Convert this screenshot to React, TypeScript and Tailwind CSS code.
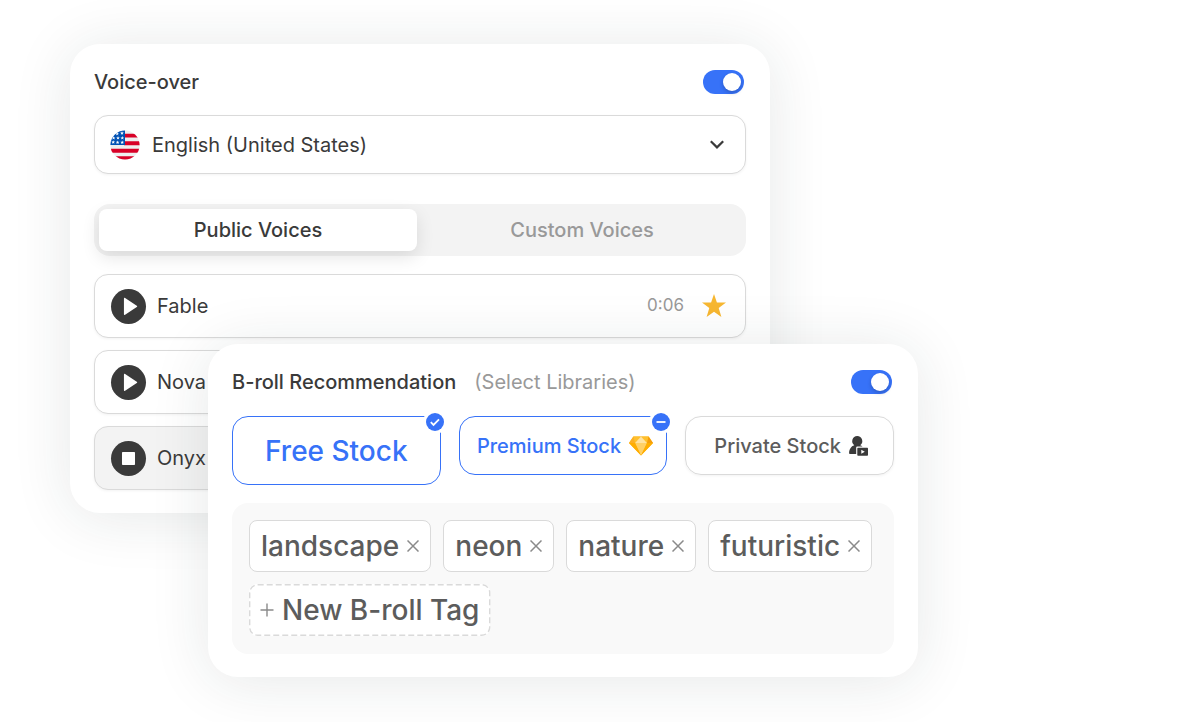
import type { ReactNode } from "react";
import { clsx } from "clsx";

const VOICES = [
  { name: "Fable", duration: "0:06", starred: true, playing: false },
  { name: "Nova", duration: "", starred: false, playing: false },
  { name: "Onyx", duration: "", starred: false, playing: true },
];

const TAGS = ["landscape", "neon", "nature", "futuristic"];

/* ---------- ICONS ---------- */

function UsFlag() {
  return (
    <svg viewBox="0 0 30 30" className="h-[30px] w-[30px]" aria-hidden="true">
      <clipPath id="flag-circle">
        <circle cx="15" cy="15" r="14.6" />
      </clipPath>
      <g clipPath="url(#flag-circle)">
        <rect width="30" height="30" fill="#eeeeef" />
        <path
          fill="#d80027"
          d="M14 3.7h16v3.9H14zM14 11.3h16v3.9H14zM0 18.8h30v3.9H0zM0 26.3h30v3.7H0z"
        />
        <rect width="15" height="15" fill="#0052b4" />
        <g fill="#fff">
          {[
            [7.2, 3.8],
            [12, 3.2],
            [3.6, 8],
            [8, 8],
            [12.3, 8],
            [3.2, 12.2],
            [7.6, 12.4],
            [12.2, 12.4],
          ].map(([x, y]) => (
            <path
              key={`${x}-${y}`}
              d="M0-1.9.5-.6 1.8-.6.8.3 1.2 1.6 0 .8-1.2 1.6-.8.3-1.8-.6-.5-.6z"
              transform={`translate(${x} ${y})`}
            />
          ))}
        </g>
      </g>
    </svg>
  );
}

function Diamond() {
  return (
    <svg viewBox="0 0 24 20" className="h-5 w-6" aria-hidden="true">
      <path fill="#fdb515" d="M4.4.6h15.2L24 7 12 19.6 0 7z" />
      <path fill="#fdb022" d="M4.4.6 6 7H0z" />
      <path fill="#ffc02e" d="M4.4.6H12L6 7z" />
      <path fill="#ffc02e" d="M19.6.6H12L18 7z" />
      <path fill="#f59e0b" d="M19.6.6 18 7h6z" />
      <path fill="#ffe3a1" d="M12 .6 18 7H6z" />
      <path fill="#ffd066" d="M6 7h12l-6 12.6z" />
      <path fill="#ffae00" d="M0 7h6l6 12.6zM24 7h-6l-6 12.6z" />
    </svg>
  );
}

function PersonVideo() {
  return (
    <svg viewBox="0 0 20 20" className="h-5 w-5" aria-hidden="true">
      <path
        fill="#3a3a3a"
        d="M8.2 0a5.1 5.1 0 0 1 3 9.2c1 .3 1.7.7 2.3 1.3H8.2a1 1 0 0 0-1 1V18H.9c-.5 0-.8-.3-.8-.8 0-4 2-7 5.2-8A5.1 5.1 0 0 1 8.2 0z"
      />
      <path
        fill="#3a3a3a"
        fillRule="evenodd"
        d="M9.3 11.8H18c.6 0 1 .4 1 1v6c0 .6-.4 1-1 1H9.3c-.6 0-1-.4-1-1v-6c0-.6.4-1 1-1zm3 2v4l3.5-2z"
      />
    </svg>
  );
}

function Star() {
  return (
    <svg viewBox="0 0 24 24" className="h-6 w-6" aria-hidden="true">
      <path
        fill="#f7b731"
        d="M12 0l2.9 8.5 9.1.1-7.3 5.4 2.7 9-7.4-5.3L4.6 23l2.7-9L0 8.6l9.1-.1z"
      />
    </svg>
  );
}

/* ---------- CONTROLS ---------- */

function Toggle({ id }: { id: string }) {
  return (
    <input
      id={id}
      type="checkbox"
      role="switch"
      defaultChecked
      className="flex h-6 w-[41px] cursor-pointer appearance-none items-center rounded-full bg-gray-300 px-[3px] before:h-[18px] before:w-[18px] before:rounded-full before:bg-white before:shadow-[0_2px_4px_rgba(0,0,0,0.2)] checked:justify-end checked:bg-[#3772f8]"
    />
  );
}

interface StockOptionProps {
  label: string;
  state?: "checked" | "partial";
  large?: boolean;
  icon?: ReactNode;
}

function StockOption({ label, state, large, icon }: StockOptionProps) {
  return (
    <label
      className={clsx(
        "relative flex cursor-pointer items-center justify-center rounded-2xl border font-medium",
        large ? "h-[69px] text-[28px]" : "h-[59px] gap-2 pl-1 text-xl",
        state
          ? "border-[#3772f8] text-[#3772f8]"
          : "border-[#dadada] text-[#5c5c5c] shadow-[0_1px_3px_rgba(0,0,0,0.05)]",
      )}
    >
      {label}
      {icon}
      <input
        type="checkbox"
        defaultChecked={state === "checked"}
        className={clsx(
          "absolute -top-1 -right-1 h-[18px] w-[18px] appearance-none rounded-full",
          state && "bg-[#3772f8] ring-3 ring-white",
        )}
      />
      {state && (
        <svg
          viewBox="0 0 18 18"
          className="pointer-events-none absolute -top-1 -right-1 h-[18px] w-[18px]"
          fill="none"
          stroke="#fff"
          strokeWidth="1.8"
          aria-hidden="true"
        >
          <path d={state === "checked" ? "M4.8 9.2l2.7 2.7 5.5-5.5" : "M4.5 9h9"} />
        </svg>
      )}
    </label>
  );
}

function VoiceRow({ name, duration, starred, playing }: (typeof VOICES)[number]) {
  return (
    <li
      className={clsx(
        "flex h-16 items-center rounded-[14px] border border-[#dadada] px-4 shadow-[0_1px_3px_rgba(0,0,0,0.05)]",
        playing ? "bg-[#f3f3f3]" : "bg-white",
      )}
    >
      <button
        type="button"
        aria-label={`${playing ? "Stop" : "Play"} ${name}`}
        className="flex h-[35px] w-[35px] items-center justify-center rounded-full bg-[#3a3a3a]"
      >
        <svg viewBox="0 0 36 36" className="h-[35px] w-[35px]" fill="#fff" aria-hidden="true">
          {playing ? (
            <rect x="11.3" y="11.3" width="13.4" height="13.4" rx="0.8" />
          ) : (
            <path d="M13.3 9.9c0-.8.6-1 1.2-.6l12 7.9c.6.4.6 1 0 1.4l-12 8c-.6.4-1.2.2-1.2-.6z" />
          )}
        </svg>
      </button>
      <span className="ml-[11px] text-xl">{name}</span>
      {duration && <span className="ml-auto text-[17px] text-[#999]">{duration}</span>}
      {starred && (
        <button type="button" aria-label="Unstar voice" className="mr-[3px] ml-[18px]">
          <Star />
        </button>
      )}
    </li>
  );
}

/* ---------- PANELS ---------- */

function VoicePanel() {
  return (
    <section className="w-full max-w-[700px] rounded-[30px] bg-white px-6 pt-[26px] pb-[23px] shadow-[0_4px_60px_rgba(25,50,45,0.11)]">
      <div className="flex h-6 items-center justify-between pr-0.5">
        <label htmlFor="voice-over" className="text-xl font-medium">
          Voice-over
        </label>
        <Toggle id="voice-over" />
      </div>

      <div className="relative mt-[21px]">
        <select
          aria-label="Language"
          className="h-[59px] w-full appearance-none rounded-[14px] border border-[#dadada] bg-white pl-[57px] text-xl shadow-[0_1px_3px_rgba(0,0,0,0.05)]"
        >
          <option>English (United States)</option>
        </select>
        <span className="pointer-events-none absolute inset-y-0 left-4 flex items-center">
          <UsFlag />
        </span>
        <span className="pointer-events-none absolute inset-y-0 right-[22px] flex items-center">
          <svg
            viewBox="0 0 14 10"
            className="h-2.5 w-3.5"
            fill="none"
            stroke="#3a3a3a"
            strokeWidth="2.2"
            aria-hidden="true"
          >
            <path d="M.8 1.2 7 7.4l6.2-6.2" />
          </svg>
        </span>
      </div>

      <div
        role="tablist"
        className="mt-[30px] flex h-[52px] gap-1.5 rounded-2xl bg-[#f3f3f3] p-[5px] text-xl font-medium"
      >
        <button
          type="button"
          role="tab"
          aria-selected="true"
          className="flex-1 rounded-lg bg-white shadow-[0_6px_18px_rgba(0,0,0,0.11)]"
        >
          Public Voices
        </button>
        <button type="button" role="tab" aria-selected="false" className="flex-1 text-[#999]">
          Custom Voices
        </button>
      </div>

      <ul className="mt-[18px] flex flex-col gap-3">
        {VOICES.map((voice) => (
          <VoiceRow key={voice.name} {...voice} />
        ))}
      </ul>
    </section>
  );
}

function BrollPanel() {
  return (
    <section className="relative -mt-[169px] ml-[138px] w-full max-w-[710px] rounded-[30px] bg-white px-6 pt-[26px] pb-[23px] shadow-[0_4px_60px_rgba(25,50,45,0.11)]">
      <div className="flex h-6 items-center pr-0.5 text-xl">
        <label htmlFor="broll" className="font-medium">
          B-roll Recommendation
        </label>
        <span className="ml-[18px] flex-1 text-[#999]">(Select Libraries)</span>
        <Toggle id="broll" />
      </div>

      <div className="mt-[22px] grid grid-cols-3 items-start gap-[18px]">
        <StockOption label="Free Stock" state="checked" large />
        <StockOption label="Premium Stock" state="partial" icon={<Diamond />} />
        <StockOption label="Private Stock" icon={<PersonVideo />} />
      </div>

      <div className="mt-[18px] flex flex-wrap gap-3 rounded-2xl bg-[#f9f9f9] p-[17px] pb-[18px] text-[28px] font-medium text-[#5c5c5c]">
        {TAGS.map((tag) => (
          <span
            key={tag}
            className="flex h-[52px] items-center gap-2 rounded-lg border border-[#dadada] bg-white px-[11px]"
          >
            {tag}
            <button type="button" aria-label={`Remove ${tag}`}>
              <svg
                viewBox="0 0 12 12"
                className="h-3 w-3"
                stroke="#8a8a8a"
                strokeWidth="1.5"
                aria-hidden="true"
              >
                <path d="M.5.5l11 11M11.5.5l-11 11" />
              </svg>
            </button>
          </span>
        ))}
        <button
          type="button"
          className="relative flex h-[52px] items-center gap-2 rounded-lg bg-white px-[11px]"
        >
          <svg className="absolute inset-0 h-full w-full overflow-visible" aria-hidden="true">
            <rect
              x="0.7"
              y="0.7"
              width="99.4%"
              height="97.3%"
              rx="8"
              fill="none"
              stroke="#dadada"
              strokeWidth="1.4"
              strokeDasharray="6 3"
            />
          </svg>
          <svg
            viewBox="0 0 14 14"
            className="h-3.5 w-3.5"
            stroke="#8a8a8a"
            strokeWidth="1.4"
            aria-hidden="true"
          >
            <path d="M7 .5v13M.5 7h13" />
          </svg>
          New B-roll Tag
        </button>
      </div>
    </section>
  );
}

export default function App() {
  return (
    <main className="min-h-screen overflow-hidden bg-white px-[70px] pt-11 pb-11 font-['Inter',sans-serif] text-[#3a3a3a]">
      <VoicePanel />
      <BrollPanel />
    </main>
  );
}
